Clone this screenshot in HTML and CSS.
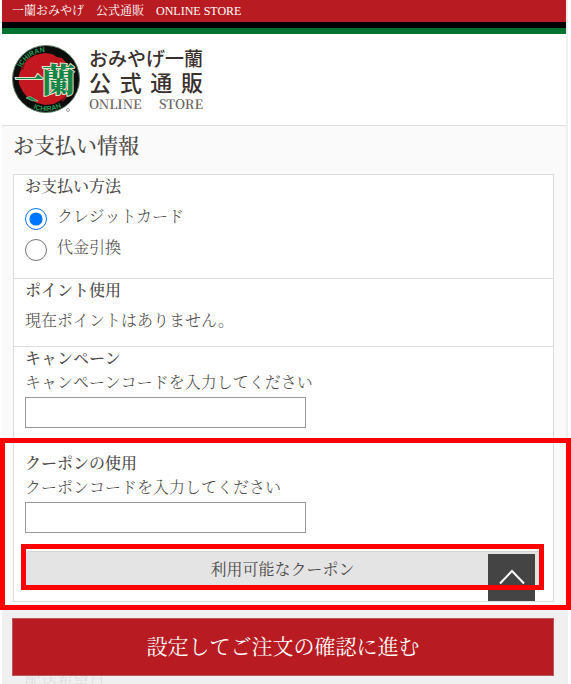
FILE: index.html
```html
<!DOCTYPE html>
<html lang="ja">
<head>
<meta charset="utf-8">
<meta name="viewport" content="width=device-width, initial-scale=1">
<title>お支払い情報</title>
<link rel="stylesheet" href="styles.css">
</head>
<body>
<div class="page">
  <p class="topbar">一蘭おみやげ　公式通販　ONLINE STORE</p>
  <header class="header">
    <a class="brand" href="#">
      <svg class="emblem" viewBox="0 0 70 70" aria-hidden="true">
        <defs>
          <path id="rim-top" d="M7 35a27 27 0 0 1 54 0"/>
          <path id="rim-bottom" d="M2 35a32 32 0 0 0 64 0"/>
        </defs>
        <circle cx="34" cy="35" r="33.500" fill="#0a0d0b" stroke="#66806d" stroke-width="1"/>
        <path d="M33 9l7 1 5 3 5 1 6 7 3 5 1 9-1 8-4 8-6 5-7 4-9 1-8-2-8-4-6-7-4-8v-9l3-8 5-7 8-5z" fill="#c4171f"/>
        <path d="M14 17l4-4M10 26l2-6M55 52l-5 5M59 45l-2 5M20 53l4 4" stroke="#7d1418" stroke-width="2"/>
        <text class="rim"><textPath href="#rim-top" startOffset="14%">ICHIRAN</textPath></text>
        <text class="rim"><textPath href="#rim-bottom" startOffset="37%">ICHIRAN</textPath></text>
        <text class="mark mark-small" x="3" y="46">一</text>
        <text class="mark" x="30" y="48">蘭</text>
        <path d="M14 54q4-3 7 0l5 3q-5 1-12-3z" fill="#128548" stroke="#b9cfae" stroke-width=".6"/>
        <circle cx="56" cy="66" r="1.500" fill="none" stroke="#8a8a8a" stroke-width=".8"/>
      </svg>
      <span class="wordmark">
        <span class="word-a">おみやげ一蘭</span>
        <span class="word-b">公 式 通 販</span>
        <span class="word-c">ONLINE STORE</span>
      </span>
    </a>
  </header>
  <main class="main">
    <h1 class="title">お支払い情報</h1>
    <form class="panel">
      <fieldset class="section pay">
        <legend class="heading">お支払い方法</legend>
        <label class="choice"><input type="radio" name="pay" checked><span>クレジットカード</span></label>
        <label class="choice"><input type="radio" name="pay"><span>代金引換</span></label>
      </fieldset>
      <section class="section points">
        <h2 class="heading">ポイント使用</h2>
        <p class="note">現在ポイントはありません。</p>
      </section>
      <section class="section campaign">
        <h2 class="heading">キャンペーン</h2>
        <label class="label" for="campaign">キャンペーンコードを入力してください</label>
        <input class="field" id="campaign" type="text">
      </section>
      <section class="section coupon">
        <h2 class="heading">クーポンの使用</h2>
        <label class="label" for="coupon">クーポンコードを入力してください</label>
        <input class="field" id="coupon" type="text">
        <div class="available">
          <button class="available-button" type="button">利用可能なクーポン</button>
          <a class="to-top" href="#" aria-label="ページの先頭へ">
            <svg viewBox="0 0 26 16" aria-hidden="true"><path d="M1 14.500L13 2l12 12.500" fill="none" stroke="#fff" stroke-width="2"/></svg>
          </a>
          <span class="frame frame-inner"></span>
        </div>
        <span class="frame frame-outer"></span>
      </section>
    </form>
    <p class="next">配送希望日</p>
  </main>
  <div class="actions">
    <button class="submit" type="button">設定してご注文の確認に進む</button>
  </div>
</div>
</body>
</html>
```
FILE: styles.css
```css
* {
  box-sizing: border-box;
}

body {
  margin: 0;
  background: #fff;
  color: #4c4948;
  font: 16px/24px "Liberation Serif", "Noto Serif CJK JP", "Noto Sans CJK JP", serif;
}

h1, h2, p {
  margin: 0;
}

button, input {
  font: inherit;
}

.page {
  position: relative;
  height: 100vh;
  margin: 0 3px 0 2px;
  overflow: clip;
  overflow-clip-margin: 5px;
  border-right: 2px solid #efefef;
  background: #fafafa;
}

.topbar {
  padding: 0 10px;
  border-bottom: 6px solid #000;
  background: #b81c22;
  color: #fff;
  font-size: 12px;
  line-height: 22px;
}

.header {
  padding: 10px 10px 11px;
  border-top: 6px solid #00722f;
  border-bottom: 1px solid #ddd;
  background: #fff;
}

.brand {
  display: flex;
  gap: 7px;
  color: #3a302d;
  text-decoration: none;
}

.emblem {
  width: 70px;
  height: 70px;
}

.rim {
  fill: #2c9a57;
  font: bold 7px "Liberation Sans", sans-serif;
}

.mark {
  fill: #128548;
  stroke: #e4e7cf;
  stroke-width: 2px;
  paint-order: stroke;
  font: 900 33px "Noto Serif CJK JP", "Noto Sans CJK JP", serif;
}

.mark-small {
  font-size: 28px;
}

.wordmark {
  display: flex;
  flex-direction: column;
  width: 114px;
  padding-top: 3px;
  font-family: "Noto Sans CJK JP", sans-serif;
}

.word-a {
  font-size: 19px;
  font-weight: 500;
  line-height: 21px;
}

.word-b {
  font-size: 22px;
  font-weight: 500;
  line-height: 26px;
  text-align-last: justify;
}

.word-c {
  color: #6b6361;
  font-family: "Noto Serif CJK JP", "Liberation Serif", serif;
  font-size: 13px;
  font-weight: 600;
  line-height: 20px;
  text-align-last: justify;
}

.main {
  padding: 0 12px 0 11px;
}

.title {
  padding-bottom: 8px;
  font-size: 21px;
  font-weight: 500;
  line-height: 40px;
}

.panel {
  border: 1px solid #ddd;
  background: #fff;
}

.section {
  margin: 0;
  padding: 0 13px 0 11px;
  border: 0;
}

.heading {
  padding: 0;
  font-size: 16px;
  font-weight: 500;
}

.pay {
  padding-bottom: 12px;
  border-bottom: 1px solid #ddd;
}

.pay .heading {
  margin-bottom: 5px;
}

.choice {
  display: flex;
  gap: 10px;
  height: 31px;
  line-height: 26px;
}

.choice input {
  width: 22px;
  height: 22px;
  margin: 4px 0 0;
  accent-color: #0075ff;
}

.choice,
.note,
.label {
  font-weight: 300;
}

.points {
  padding-bottom: 13px;
  border-bottom: 1px solid #ddd;
}

.note {
  padding-top: 6px;
}

.campaign {
  padding-bottom: 24px;
}

.label {
  display: block;
}

.field {
  display: block;
  width: 281px;
  max-width: 100%;
  height: 31px;
  margin-top: 2px;
  border: 1px solid #999;
  background: #fff;
}

.coupon {
  position: relative;
  padding-bottom: 13px;
}

.available {
  position: relative;
  margin-top: 18px;
}

.available-button {
  display: block;
  width: 100%;
  height: 37px;
  padding: 0;
  border: 1px solid #d6d6d6;
  background: #e4e4e4;
  color: #4c4948;
  font-weight: 400;
}

.to-top {
  position: absolute;
  top: 3px;
  right: 5px;
  display: flex;
  justify-content: center;
  width: 47px;
  height: 47px;
  padding-top: 15px;
  background: #444;
}

.to-top svg {
  width: 26px;
  height: 16px;
}

.frame {
  position: absolute;
  border: 5px solid #f00;
  pointer-events: none;
}

.frame-inner {
  inset: -7px -4px -2px -4px;
}

.frame-outer {
  z-index: 2;
  inset: -14px -18px -9px -14px;
}

.next {
  padding: 66px 12px 0;
}

.actions {
  position: absolute;
  right: -2px;
  bottom: 0;
  left: 0;
  padding: 10px 14px 8px 10px;
  background: rgb(238 238 238 / 90%);
}

.submit {
  display: block;
  width: 100%;
  height: 58px;
  border: 1px solid #b9585c;
  background: #b81c22;
  color: #fff;
  font-size: 21px;
}
```
